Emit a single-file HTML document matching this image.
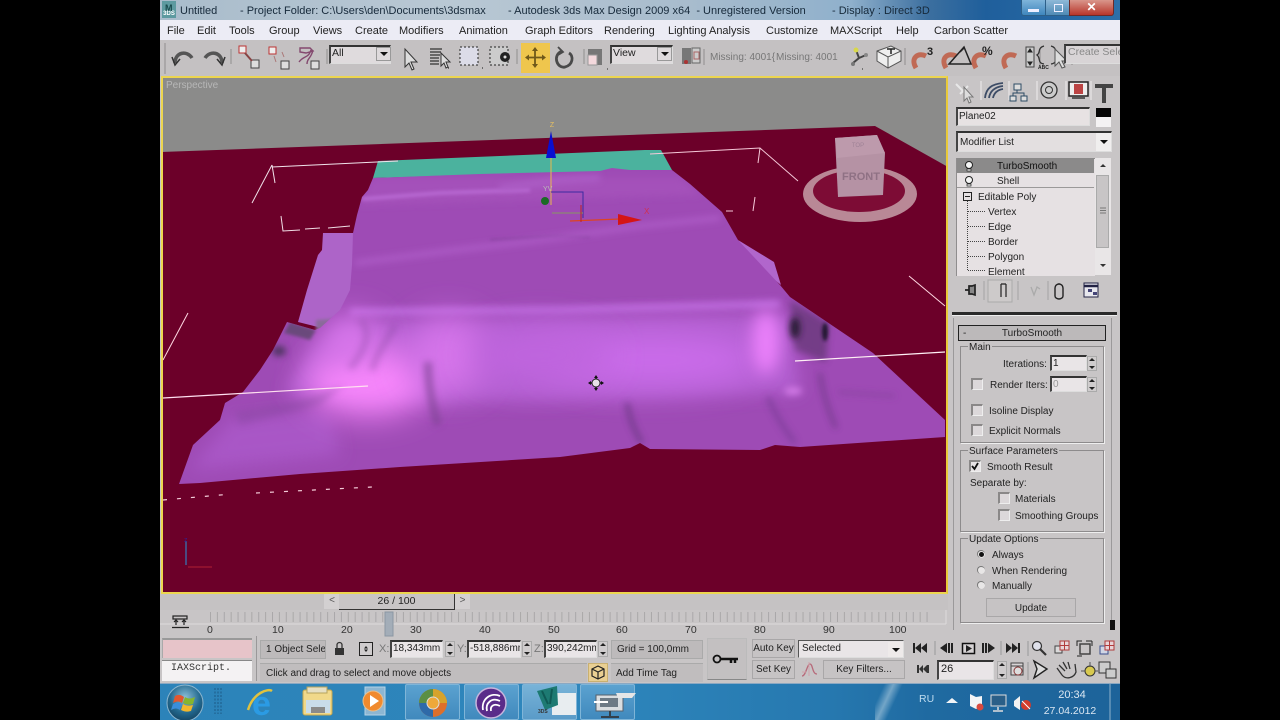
<!DOCTYPE html>
<html><head><meta charset="utf-8"><style>
html,body{margin:0;padding:0;background:#000;width:1280px;height:720px;overflow:hidden}
#s{position:absolute;left:160px;top:0;width:960px;height:720px;background:#c8c5c6;overflow:hidden;font-family:"Liberation Sans",sans-serif;font-size:10.5px;color:#222}
#s *{box-sizing:border-box}
.t{position:absolute;white-space:nowrap;line-height:12px}
.m{position:absolute;white-space:nowrap;line-height:12px;top:25px;font-size:11px;color:#222}
.n{position:absolute;white-space:nowrap;line-height:12px;top:624px;font-size:10.5px;color:#333}
.b{position:absolute}
.in{position:absolute;background:#e9e5e7;border-top:2px solid #333;border-left:2px solid #444;border-right:1px solid #ddd;border-bottom:1px solid #ddd;white-space:nowrap;overflow:hidden}
.cb{position:absolute;width:12px;height:12px;background:#dcd8da;border-top:2px solid #8a8888;border-left:2px solid #8a8888;border-right:1px solid #eee;border-bottom:1px solid #eee}
.gp{position:absolute;border:1px solid #8d8b8c;box-shadow:1px 1px 0 #eee}
.lg{position:absolute;background:#c8c5c6;padding:0 1px;line-height:12px;white-space:nowrap;color:#222}
.r{position:absolute;width:8px;height:8px;border-radius:50%;background:#e8e6e6;border-top:1px solid #777;border-left:1px solid #777}
.sp{position:absolute;width:10px;background:#cfcccd;border:1px solid #aaa}
.sp:before{content:"";position:absolute;left:1px;top:1px;border:3px solid transparent;border-top:0;border-bottom:3px solid #222}
.sp:after{content:"";position:absolute;left:1px;bottom:1px;border:3px solid transparent;border-bottom:0;border-top:3px solid #222}
.dd{position:absolute;background:#dedadc;border:1px solid #999}
.dd:after{content:"";position:absolute;left:50%;top:50%;margin:-2px 0 0 -4px;border:4px solid transparent;border-bottom:0;border-top:4px solid #111}
.btn{position:absolute;background:#c6c3c4;border:1px solid #a9a7a8;text-align:center;color:#222}
.tb{position:absolute;top:684px;width:55px;height:36px;background:linear-gradient(#5ba2d0,#4089bd);border:1px solid #7fb5d8;border-radius:2px}
svg{position:absolute;overflow:visible}
</style></head><body><div id="s">

<!-- title bar -->
<div class="b" style="left:0;top:0;width:960px;height:20px;background:linear-gradient(90deg,#a9bccb 0,#b9c8d4 30%,#a8bccd 55%,#8fb0cc 72%,#3c6f9f 80%,#1f5f9c 86%,#2d6fa8 100%)"></div>
<div class="b" style="left:2px;top:1px;width:14px;height:17px;background:#5d9aa0;color:#fff;font-size:6px;line-height:26px;font-weight:bold;text-align:center">3DS</div>
<div class="t" style="left:5px;top:2px;font-size:9px;font-weight:bold;color:#17494c">M</div>
<div class="t" style="left:20px;top:5px;font-size:11px;color:#16293a">Untitled</div>
<div class="t" style="left:80px;top:5px;font-size:11px;color:#16293a">- Project Folder: C:\Users\den\Documents\3dsmax</div>
<div class="t" style="left:348px;top:5px;font-size:11px;color:#16293a">- Autodesk 3ds Max Design 2009 x64&nbsp; - Unregistered Version</div>
<div class="t" style="left:672px;top:5px;font-size:11px;color:#16293a">- Display : Direct 3D</div>
<div class="b" style="left:861px;top:0;width:25px;height:16px;background:linear-gradient(#7fb4da,#3f86bd);border-radius:0 0 0 3px;border:1px solid #2d5f88;border-top:0"></div>
<div class="b" style="left:868px;top:9px;width:11px;height:3px;background:#eef"></div>
<div class="b" style="left:886px;top:0;width:23px;height:16px;background:linear-gradient(#8fb9d8,#4f8ab5);border-bottom:1px solid #2d5f88"></div>
<div class="b" style="left:894px;top:4px;width:9px;height:8px;border:1px solid #eef"></div>
<div class="b" style="left:909px;top:0;width:45px;height:16px;background:linear-gradient(#d9968b,#b8352a);border:1px solid #6d2a28;border-top:0;border-radius:0 0 3px 0;color:#fff;font-weight:bold;font-size:12px;text-align:center;line-height:15px">✕</div>

<!-- menu -->
<div class="b" style="left:0;top:20px;width:960px;height:20px;background:#ececf5"></div>
<div class="m" style="left:7px">File</div>
<div class="m" style="left:37px">Edit</div>
<div class="m" style="left:69px">Tools</div>
<div class="m" style="left:109px">Group</div>
<div class="m" style="left:153px">Views</div>
<div class="m" style="left:195px">Create</div>
<div class="m" style="left:239px">Modifiers</div>
<div class="m" style="left:299px">Animation</div>
<div class="m" style="left:365px">Graph Editors</div>
<div class="m" style="left:444px">Rendering</div>
<div class="m" style="left:508px">Lighting Analysis</div>
<div class="m" style="left:606px">Customize</div>
<div class="m" style="left:670px">MAXScript</div>
<div class="m" style="left:736px">Help</div>
<div class="m" style="left:774px">Carbon Scatter</div>

<!-- toolbar -->
<div class="b" style="left:0;top:40px;width:960px;height:36px;background:#c4c1c2"></div>
<svg width="960" height="40" style="left:0;top:40px" fill="none">
<path d="M5 3V34" stroke="#8f8d8e"/>
<path d="M15 23C15 12 27 10 32 18" stroke="#555" stroke-width="3.500"/><path d="M12 17l3 8 5-6" stroke="#333" stroke-width="1.500"/>
<path d="M45 18C50 10 62 12 62 23" stroke="#555" stroke-width="3.500"/><path d="M57 19l5 6 3-8" stroke="#333" stroke-width="1.500"/>
<path d="M71 9V24M167 9V24M357 9V24M424 9V24" stroke="#908e8f"/>
<rect x="79" y="6" width="7" height="7" fill="#eee" stroke="#b33"/><rect x="91" y="20" width="8" height="8" fill="#ddd" stroke="#444"/><path d="M85 13l7 8" stroke="#844" stroke-width="2"/>
<rect x="109" y="7" width="7" height="7" fill="#eee" stroke="#b33"/><rect x="121" y="21" width="8" height="8" fill="#ddd" stroke="#444"/><path d="M114 16l2 6M122 12l2 5" stroke="#a77"/>
<path d="M140 8h10l3 3-7 2-6-1zM139 22c5-7 9-3 12-12M147 24c0-6 4-5 6-14" stroke="#84496f" stroke-width="1.400"/><rect x="151" y="21" width="8" height="8" fill="#ddd" stroke="#444"/>
<path d="M245 9v18l4-4 3 7 2-1-3-7h6z" fill="#ddd" stroke="#333"/>
<path d="M270 9h12M270 12h11M270 15h10M270 18h9M270 21h9M270 24h9" stroke="#333" stroke-width="1.300"/><path d="M281 13v13l3-3 2 5 2-1-2-5h4z" fill="#ddd" stroke="#333"/>
<rect x="300" y="7" width="18" height="18" fill="#dcdce8" stroke="#222" stroke-dasharray="2 2"/>
<rect x="330" y="7" width="18" height="18" fill="#ccc" stroke="#222" stroke-dasharray="2 2"/><circle cx="345" cy="17" r="5" fill="#222"/><circle cx="345" cy="17" r="1.500" fill="#ddd"/>
<path d="M322 28h1M288 28h1" stroke="#111"/>
<rect x="361" y="3" width="29" height="30" fill="#efc64d"/>
<path d="M375 9V26M367 17.500H384" stroke="#70591a" stroke-width="1.800"/><path d="M375 7l3 4h-6zM375 28l3-4h-6zM365 17.500l4-3v6zM386 17.500l-4-3v6z" fill="#70591a"/>
<path d="M402 11C392 15 397 29 405 27C413 25 414 16 409 13" stroke="#4a4a4a" stroke-width="2.800"/><path d="M398 7l5 5-5 3" stroke="#4a4a4a" stroke-width="1.800"/>
<rect x="428" y="9" width="14" height="16" fill="#777"/><rect x="428" y="15" width="9" height="10" fill="#f4d9dd" stroke="#999"/>
<path d="M447 29h1M702 29h1" stroke="#222"/>
<rect x="522" y="8" width="9" height="16" fill="#777"/><rect x="532" y="8" width="8" height="15" fill="#ccc" stroke="#666"/><circle cx="526" cy="22" r="2" fill="#a33"/><path d="M534 12h5v7h-5z" stroke="#a66"/>
<path d="M544 9V25M745 8V25M880 8V25M912 8V25" stroke="#8f8d8e"/>
<path d="M696 10l3 8-6 5M699 18l7-3" stroke="#444" stroke-width="2"/><circle cx="696" cy="10" r="2.500" fill="#d8d84a"/><circle cx="693" cy="24" r="2" fill="#777"/><circle cx="706" cy="15" r="2" fill="#888"/>
<path d="M717 11l14-5 10 5v10l-13 7-11-7z" fill="#eee" stroke="#555"/><path d="M717 11l11 6 13-6M728 17v11" stroke="#555"/><path d="M727 9h8M731 9v5" stroke="#222" stroke-width="1.500"/>
<g stroke-width="5"><path d="M756 28C750 18 758 12 766 16" stroke="#c06a55"/><path d="M786 28C780 18 788 12 796 16" stroke="#c06a55"/><path d="M816 28C810 18 818 12 826 16" stroke="#c06a55"/><path d="M846 28C840 18 848 12 856 16" stroke="#c06a55"/></g>
<path d="M789 24L804 7l7 17zM800 12l4-4" stroke="#222" stroke-width="1.500"/>
<rect x="866" y="7" width="8" height="20" fill="#ccc" stroke="#444"/><path d="M868 12h4l-2-3zM868 22h4l-2 3z" fill="#222" stroke="#222"/>
<path d="M884 6C877 8 881 13 877 15 881 18 877 23 884 24M891 6C898 8 894 13 898 15 894 18 898 23 891 24" stroke="#333" stroke-width="1.300"/>
<path d="M895 9v17l4-4 3 6 3-1-3-6h5z" fill="#ddd" stroke="#555"/>
</svg>
<div class="t" style="left:767px;top:46px;font-size:11px;font-weight:bold;color:#222">3</div>
<div class="t" style="left:822px;top:45px;font-size:12px;font-weight:bold;color:#222">%</div>
<div class="t" style="left:878px;top:62px;font-size:5px;font-weight:bold;color:#222">ABC</div>
<div class="in" style="left:169px;top:45px;width:62px;height:19px;padding-left:1px;line-height:13px;color:#222;background:#dfdbdd">All</div>
<div class="dd" style="left:216px;top:47px;width:15px;height:14px"></div>
<div class="in" style="left:450px;top:45px;width:63px;height:19px;padding-left:1px;line-height:13px;background:#dfdbdd">View</div>
<div class="dd" style="left:497px;top:47px;width:15px;height:14px"></div>
<div class="t" style="left:550px;top:52px;color:#777;font-size:10px">Missing: 4001{</div>
<div class="t" style="left:616px;top:52px;color:#777;font-size:10px;width:62px;overflow:hidden">Missing: 4001{</div>
<div class="in" style="left:904px;top:44px;width:56px;height:20px;color:#888;padding-left:2px;line-height:13px;border-right:0;background:#d8d4d6">Create Selec</div>

<!-- viewport -->
<svg width="787" height="518" viewBox="161 76 787 518" style="left:1px;top:76px;position:absolute;overflow:hidden">
<defs>
<filter id="b1" x="-100%" y="-300%" width="300%" height="700%"><feGaussianBlur stdDeviation="1.500"/></filter>
<filter id="b3" x="-100%" y="-300%" width="300%" height="700%"><feGaussianBlur stdDeviation="3.500"/></filter>
<filter id="b6" x="-100%" y="-200%" width="300%" height="500%"><feGaussianBlur stdDeviation="8"/></filter>
<filter id="b12" x="-100%" y="-100%" width="300%" height="300%"><feGaussianBlur stdDeviation="16"/></filter>
<clipPath id="c"><path d="M179 484L193 445 220 420 225 403 243 392 260 370 273 350 287 322 315 330 320 328 340 310 350 290 352 265 353 233 357 215 362 197 368 190 373 178 480 174 600 171 612 168 630 170 672 170 690 184 722 212 738 240 780 285 790 297 873 353 945 420 945 437 800 447 775 445 760 450 650 449 640 443 630 448 560 457 400 467 300 474 200 483Z"/></clipPath>
</defs>
<rect x="161" y="76" width="787" height="518" fill="#8b8b8a"/>
<path d="M161 152L875 126 948 167V594H161Z" fill="#6c0029"/>
<path d="M378 161L645 150 661 150 672 170 373 178Z" fill="#4bb29e"/>
<path d="M323 233L355 233 350 300 330 330 298 322 307 290 318 255 322 250Z" fill="#ad64c8"/>
<path d="M316 320L346 318 345 326 316 334Z" fill="#8a6a9a" filter="url(#b1)"/>
<path d="M722 212L738 240 774 262 781 285 760 268 738 240Z" fill="#b166cc"/>
<rect x="160" y="120" width="800" height="400" fill="#9e4bb5" clip-path="url(#c)"/>
<g clip-path="url(#c)">
<path d="M373 178H680L700 195 360 205Z" fill="#a451ba" filter="url(#b3)"/>
<path d="M362 199L440 193 530 190" stroke="#b767d1" stroke-width="4" fill="none" filter="url(#b1)"/>
<path d="M500 188L560 180 600 178" stroke="#ad5ec7" stroke-width="6" fill="none" filter="url(#b3)"/>
<path d="M490 240L560 236 590 237" stroke="#84409c" stroke-width="2" fill="none" filter="url(#b1)"/>
<path d="M355 263L440 252 540 240 640 226 720 218" stroke="#ae5cc7" stroke-width="5" fill="none" filter="url(#b3)"/>
<path d="M345 322L790 314 800 392 600 400 420 402 285 395 310 350Z" fill="#b25ed0" filter="url(#b6)"/>
<path d="M350 312L560 310 780 304" stroke="#bc69db" stroke-width="8" fill="none" filter="url(#b3)"/>
<path d="M190 470L340 455 330 410 230 420Z" fill="#a956c6" filter="url(#b6)"/>
<ellipse cx="368" cy="382" rx="62" ry="34" fill="#f786fb" filter="url(#b12)"/>
<ellipse cx="350" cy="340" rx="30" ry="24" fill="#d977ec" filter="url(#b12)"/>
<ellipse cx="448" cy="355" rx="40" ry="38" fill="#d574ea" filter="url(#b12)"/>
<ellipse cx="650" cy="360" rx="110" ry="26" fill="#ca6cea" filter="url(#b12)"/>
<ellipse cx="540" cy="355" rx="70" ry="28" fill="#bf65de" filter="url(#b12)"/>
<ellipse cx="766" cy="342" rx="14" ry="32" fill="#ea80fa" filter="url(#b6)"/>
<path d="M360 320C372 330 366 350 350 368" stroke="#8d4ca6" stroke-width="6" fill="none" filter="url(#b3)" opacity=".4"/>
<path d="M395 325C388 340 378 350 372 370" stroke="#7f4297" stroke-width="6" fill="none" filter="url(#b3)" opacity=".35"/>
<path d="M428 362C428 385 432 405 438 425" stroke="#7a4290" stroke-width="8" fill="none" filter="url(#b3)" opacity=".6"/>
<path d="M235 412L300 400 345 385 320 405 240 425Z" fill="#7e4498" filter="url(#b3)" opacity=".3"/>
<path d="M290 322L316 330 310 340 284 333Z" fill="#6a4a7c" filter="url(#b1)"/>
<ellipse cx="279" cy="351" rx="7" ry="5" fill="#4e3460" filter="url(#b3)"/>
<path d="M627 403C630 420 634 430 642 443" stroke="#703a88" stroke-width="5" fill="none" filter="url(#b3)" opacity=".85"/>
<path d="M768 397C775 415 785 430 795 443" stroke="#783c96" stroke-width="5" fill="none" filter="url(#b3)" opacity=".7"/>
<path d="M820 373C822 390 828 410 836 428" stroke="#5a3072" stroke-width="3" fill="none" filter="url(#b3)" opacity=".7"/>
<path d="M790 300L829 323 826 362 795 350Z" fill="#6d3a7f" filter="url(#b3)" opacity=".85"/>
<ellipse cx="795" cy="328" rx="5" ry="11" fill="#271a33" filter="url(#b3)"/>
<ellipse cx="825" cy="332" rx="3" ry="9" fill="#241630" filter="url(#b1)"/>
<ellipse cx="793" cy="391" rx="9" ry="4" fill="#d27ae6" filter="url(#b3)"/>
<path d="M838 392L895 396" stroke="#7e3d96" stroke-width="2" fill="none" filter="url(#b3)"/>
</g>
<path d="M272 167L398 161M272 165L252 203M272 165L275 183" stroke="#f0e2ea" fill="none"/>
<path d="M650 154L760 148 798 181M760 148L758 163M755 197L753 211M733 211L726 211" stroke="#f5c9d9" fill="none"/>
<path d="M281 216L283 231 300 230M305 229L320 228M328 228L350 226" stroke="#f0dde5" fill="none"/>
<path d="M909 276L945 306M188 313L163 360" stroke="#ffd7e2" fill="none"/>
<path d="M163 398L368 386" stroke="#ffdff0" stroke-width="1.200" fill="none"/>
<path d="M795 361L945 352" stroke="#fff0f5" stroke-width="1.200" fill="none"/>
<path d="M163 500L232 494M256 493L372 487" stroke="#f3ccd8" stroke-dasharray="4 10" stroke-width="1.200" fill="none"/>
<path d="M551 155V205" stroke="#e8b84f"/>
<path d="M551 131L556 158H546Z" fill="#0a0fd0"/>
<path d="M551 192H583V218" stroke="#3b2aa0" fill="none"/><path d="M583 213H552" stroke="#8c8a70" stroke-width="2" fill="none" opacity=".6"/>
<path d="M570 221L620 219" stroke="#d42" stroke-width="1.200"/><path d="M618 214L642 220 618 225Z" fill="#d51515"/><path d="M581 205V222" stroke="#b22"/>
<circle cx="545" cy="201" r="4" fill="#1b6a25"/>
<text x="552" y="127" font-size="7" fill="#e8c060" text-anchor="middle" font-family="Liberation Sans">Z</text>
<text x="644" y="214" font-size="8" fill="#d03050" font-family="Liberation Sans">X</text>
<text x="543" y="191" font-size="7" fill="#bbb" font-family="Liberation Sans">YV</text>
<!-- viewcube -->
<ellipse cx="860" cy="194" rx="57" ry="28" fill="#b98896"/>
<ellipse cx="859" cy="191" rx="46" ry="21" fill="#7d0c35"/>
<path d="M835 138L877 135 885 153 883 195 838 197Z" fill="#b592a4"/>
<path d="M835 138L877 135 885 153 837 158Z" fill="#bd9aac"/>
<text x="861" y="180" font-size="11" font-weight="bold" fill="#8f7184" text-anchor="middle" font-family="Liberation Sans">FRONT</text>
<text x="858" y="147" font-size="6" fill="#9f8296" text-anchor="middle" font-family="Liberation Sans">TOP</text>
<!-- small axis -->
<path d="M186 565V541" stroke="#4a4a80" stroke-width="2"/><path d="M188 567H212" stroke="#b02033"/><text x="184" y="542" font-size="7" fill="#34208a" font-family="Liberation Sans">z</text>
<!-- cursor -->
<path d="M596 377V389M590 383H602" stroke="#111" stroke-width="1.500"/><circle cx="596" cy="383" r="4" fill="#e8e0e8" stroke="#222"/><path d="M596 375l2 3h-4zM596 391l2-3h-4zM588 383l3 2v-4zM604 383l-3 2v-4z" fill="#111"/>
</svg>
<div class="b" style="left:1px;top:76px;width:787px;height:518px;border:2px solid #ecd54f;border-right-color:#e8c93a"></div>
<div class="t" style="left:6px;top:80px;color:#b7b7b7;font-size:10px">Perspective</div>

<!-- command panel -->
<div class="b" style="left:788px;top:76px;width:172px;height:554px;background:#c8c5c6"></div>
<svg width="172" height="40" style="left:788px;top:78px" fill="none">
<path d="M8 6L22 20M20 8l-8 8" stroke="#e8e8e8" stroke-width="2"/><path d="M16 9v14l3-3 2 5 2-1-2-5h4z" fill="#ddd" stroke="#777"/>
<path d="M33 3V22M61 3V22M89 3V22M118 3V22M143 3V22" stroke="#efeded"/>
<path d="M37 20C38 10 44 6 55 5M41 20C42 13 47 9 55 8M45 20C46 15 49 12 55 11" stroke="#3d4c66" stroke-width="1.800"/>
<rect x="66" y="6" width="7" height="6" fill="#ddd" stroke="#2d4a64"/><rect x="62" y="18" width="6" height="5" fill="#ddd" stroke="#2d4a64"/><rect x="73" y="18" width="6" height="5" fill="#ddd" stroke="#2d4a64"/><path d="M69 12V15M65 18V15H76V18" stroke="#2d4a64"/>
<circle cx="101" cy="12" r="8" fill="#ccc" stroke="#333" stroke-width="1.300"/><circle cx="101" cy="12" r="3.500" stroke="#333"/>
<rect x="121" y="4" width="19" height="14" fill="#eee" stroke="#222" stroke-width="1.500"/><path d="M126 6h9v10h-9z" fill="#b44"/><path d="M124 20H137" stroke="#333" stroke-width="1.500"/>
<path d="M147 6H165V10H158V25H154V10H147Z" fill="#444"/>
</svg>
<div class="in" style="left:796px;top:107px;width:134px;height:19px;padding-left:1px;line-height:16px;font-size:10px;background:#e7e2e3">Plane02</div>
<div class="b" style="left:936px;top:108px;width:15px;height:9px;background:#050505"></div>
<div class="b" style="left:936px;top:117px;width:15px;height:10px;background:#f4f2f3"></div>
<div class="in" style="left:796px;top:131px;width:156px;height:21px;padding-left:2px;line-height:20px;font-size:10px;background:#e3dfe0">Modifier List</div>
<div class="dd" style="left:936px;top:133px;width:15px;height:18px;background:#f0eeee;border:0"></div>
<!-- stack -->
<div class="b" style="left:796px;top:158px;width:139px;height:118px;background:#e6e1e3;border-top:1px solid #8f8d8e;border-left:1px solid #8f8d8e"></div>
<div class="b" style="left:797px;top:158px;width:137px;height:15px;background:#8b8a8a"></div>
<div class="b" style="left:797px;top:187px;width:137px;height:1px;background:#9b9999"></div>
<div class="t" style="left:837px;top:161px;font-size:10px;color:#111">TurboSmooth</div>
<div class="t" style="left:837px;top:176px;font-size:10px">Shell</div>
<svg width="140" height="120" style="left:796px;top:158px" fill="none">
<circle cx="13" cy="7" r="3.500" fill="#f5f5f5" stroke="#222"/><path d="M11 11h4v2h-4z" fill="#fff" stroke="#222" stroke-width=".7"/>
<circle cx="13" cy="22" r="3.500" fill="#f5f5f5" stroke="#222"/><path d="M11 26h4v2h-4z" fill="#fff" stroke="#222" stroke-width=".7"/>
<rect x="7.500" y="34.500" width="8" height="8" stroke="#222"/><path d="M9 38.500h5" stroke="#222"/>
<path d="M11.500 43V113M12 53.500h18M12 68.500h18M12 83.500h18M12 98.500h18M12 112.500h18" stroke="#444" stroke-dasharray="1 1"/>
</svg>
<div class="t" style="left:818px;top:192px;font-size:10px">Editable Poly</div>
<div class="t" style="left:828px;top:207px;font-size:10px">Vertex</div>
<div class="t" style="left:828px;top:222px;font-size:10px">Edge</div>
<div class="t" style="left:828px;top:237px;font-size:10px">Border</div>
<div class="t" style="left:828px;top:252px;font-size:10px">Polygon</div>
<div class="b" style="left:828px;top:267px;width:60px;height:9px;overflow:hidden"><div class="t" style="left:0;top:0;font-size:10px">Element</div></div>
<div class="b" style="left:935px;top:158px;width:16px;height:117px;background:#e9e6e7"></div>
<div class="b" style="left:936px;top:175px;width:13px;height:73px;background:#c8c5c6;border:1px solid #aaa"></div>
<svg width="16" height="117" style="left:935px;top:158px" fill="none"><path d="M5 9h6l-3-3zM5 106h6l-3 3z" fill="#333"/><path d="M5 50h6M5 52.500h6M5 55h6" stroke="#777"/></svg>
<svg width="172" height="30" style="left:788px;top:278px" fill="none">
<path d="M17 12h4M21 8h3l3-1v10l-3-1h-3z" stroke="#222" stroke-width="1.700" fill="#888"/>
<path d="M36 3V22M70 3V22M100 3V22" stroke="#a5a3a4"/>
<rect x="40" y="2" width="24" height="22" stroke="#aaa" fill="#cdcaca"/>
<path d="M53 6H58M53 6V19M58 6V19" stroke="#222" stroke-width="1.200"/>
<path d="M83 9l3 8 3-8 3 2" stroke="#aaa" stroke-width="1.300"/>
<path d="M107 10a4 4 0 0 1 8 0v8a4 3 0 0 1-8 0zM110 6h2" stroke="#222" stroke-width="1.400"/>
<rect x="136" y="5" width="14" height="14" fill="#e8e8ee" stroke="#224"/><path d="M136 8h14" stroke="#224" stroke-width="2.500"/><rect x="140" y="11" width="4" height="3" fill="#447"/><rect x="145" y="14" width="4" height="3" fill="#447"/>
</svg>
<div class="b" style="left:792px;top:312px;width:165px;height:3px;background:#2a2a2a"></div>
<div class="b" style="left:792px;top:315px;width:165px;height:1px;background:#eee"></div>

<!-- rollout -->
<div class="b" style="left:793px;top:318px;width:1px;height:312px;background:#9b999a"></div>
<div class="b" style="left:951px;top:318px;width:1px;height:310px;background:#9b999a"></div>
<div class="b" style="left:798px;top:325px;width:148px;height:16px;background:#bcb9ba;border:1px solid #222;text-align:center;line-height:15px;font-size:10px;color:#222">TurboSmooth</div>
<div class="t" style="left:803px;top:328px;font-size:10px">-</div>
<div class="gp" style="left:800px;top:346px;width:144px;height:97px"></div>
<div class="lg" style="left:808px;top:342px;font-size:10px">Main</div>
<div class="t" style="left:843px;top:359px;font-size:10px">Iterations:</div>
<div class="in" style="left:890px;top:355px;width:37px;height:16px;line-height:13px;padding-left:1px;font-size:10px">1</div>
<div class="sp" style="left:927px;top:356px;height:15px"></div>
<div class="cb" style="left:811px;top:378px"></div>
<div class="t" style="left:830px;top:380px;font-size:10px">Render Iters:</div>
<div class="in" style="left:890px;top:376px;width:37px;height:16px;line-height:13px;padding-left:1px;font-size:10px;color:#999">0</div>
<div class="sp" style="left:927px;top:377px;height:15px"></div>
<div class="cb" style="left:811px;top:404px"></div>
<div class="t" style="left:829px;top:406px;font-size:10px">Isoline Display</div>
<div class="cb" style="left:811px;top:424px"></div>
<div class="t" style="left:829px;top:426px;font-size:10px">Explicit Normals</div>

<div class="gp" style="left:800px;top:450px;width:144px;height:82px"></div>
<div class="lg" style="left:808px;top:446px;font-size:10px">Surface Parameters</div>
<div class="cb" style="left:809px;top:460px;background:#e8e4e6"></div>
<svg width="12" height="12" style="left:809px;top:460px" fill="none"><path d="M3 6l2.500 3L9 3" stroke="#111" stroke-width="1.800"/></svg>
<div class="t" style="left:827px;top:462px;font-size:10px">Smooth Result</div>
<div class="t" style="left:810px;top:478px;font-size:10px">Separate by:</div>
<div class="cb" style="left:838px;top:492px"></div>
<div class="t" style="left:855px;top:494px;font-size:10px">Materials</div>
<div class="cb" style="left:838px;top:509px"></div>
<div class="t" style="left:855px;top:511px;font-size:10px">Smoothing Groups</div>

<div class="gp" style="left:800px;top:538px;width:144px;height:85px"></div>
<div class="lg" style="left:808px;top:534px;font-size:10px">Update Options</div>
<div class="r" style="left:817px;top:550px"></div>
<div class="b" style="left:819px;top:552px;width:5px;height:5px;border-radius:50%;background:#111"></div>
<div class="t" style="left:832px;top:550px;font-size:10px">Always</div>
<div class="r" style="left:817px;top:566px"></div>
<div class="t" style="left:832px;top:566px;font-size:10px">When Rendering</div>
<div class="r" style="left:817px;top:581px"></div>
<div class="t" style="left:832px;top:581px;font-size:10px">Manually</div>
<div class="btn" style="left:826px;top:598px;width:90px;height:19px;line-height:19px;font-size:10px">Update</div>
<div class="b" style="left:950px;top:620px;width:5px;height:10px;background:#111"></div>

<!-- time slider -->
<div class="b" style="left:0;top:594px;width:788px;height:16px;background:#c5c2c3"></div>
<div class="b" style="left:164px;top:594px;width:16px;height:15px;background:#d3d0d1;color:#555;font-size:10px;text-align:center;line-height:14px">&lt;</div>
<div class="b" style="left:179px;top:594px;width:116px;height:16px;background:#c8c5c6;border-bottom:1px solid #333;border-right:1px solid #333;text-align:center;line-height:15px;font-size:10.500px;color:#222">26 / 100</div>
<div class="b" style="left:295px;top:594px;width:15px;height:15px;background:#d3d0d1;color:#555;font-size:10px;text-align:center;line-height:14px">&gt;</div>
<svg width="790" height="36" style="left:0;top:610px" fill="none">
<line x1="50" y1="7" x2="770" y2="7" stroke="#aaa8a9" stroke-width="10" stroke-dasharray="1 5.890"/>
<path d="M0 14H786M786 0V14" stroke="#dedcdc"/>
<rect x="225" y="2" width="8" height="24" fill="#a3adb8" stroke="#8b97a3"/>
<rect x="13" y="6" width="14" height="3" stroke="#222" stroke-width="1.200"/><path d="M12 17.500H29M16 10v5M24 10v5M14 12l2-2 2 2M22 12l2-2 2 2" stroke="#222" stroke-width="1.200"/>
</svg>
<div class="n" style="left:47px">0</div>
<div class="n" style="left:112px">10</div>
<div class="n" style="left:181px">20</div>
<div class="n" style="left:250px">30</div>
<div class="n" style="left:319px">40</div>
<div class="n" style="left:388px">50</div>
<div class="n" style="left:456px">60</div>
<div class="n" style="left:525px">70</div>
<div class="n" style="left:594px">80</div>
<div class="n" style="left:663px">90</div>
<div class="n" style="left:729px">100</div>

<!-- status -->
<div class="b" style="left:2px;top:638px;width:90px;height:20px;background:#e7c4c9;border-top:2px solid #999;border-left:1px solid #aaa"></div>
<div class="b" style="left:2px;top:660px;width:90px;height:21px;background:#f4f2f3;border-top:1px solid #888;padding-left:9px;line-height:16px;font-family:'Liberation Mono',monospace;font-size:10px;color:#333">IAXScript.</div>
<div class="b" style="left:96px;top:636px;width:1px;height:45px;background:#9a9899"></div>
<div class="b" style="left:100px;top:640px;width:66px;height:19px;background:#bdbabb;border:1px solid #aaa;line-height:18px;padding-left:5px;font-size:10px;overflow:hidden;white-space:nowrap">1 Object Sele</div>
<svg width="40" height="20" style="left:172px;top:640px" fill="none"><rect x="3" y="8" width="9" height="7" fill="#333"/><path d="M5 8V5a2.500 2.500 0 0 1 5 0V8" stroke="#333" stroke-width="1.300"/></svg>
<div class="b" style="left:199px;top:642px;width:14px;height:14px;border:1px solid #222;background:#cfcccd"></div>
<svg width="14" height="14" style="left:199px;top:642px" fill="none"><path d="M7 4l2 2.500H5zM7 10l2-2.500H5z" fill="#222"/></svg>
<div class="t" style="left:219px;top:643px;font-size:11px;color:#777">X:</div>
<div class="in" style="left:230px;top:640px;width:53px;height:18px;line-height:14px;padding-left:1px;font-size:10px">18,343mm</div>
<div class="sp" style="left:285px;top:641px;height:16px"></div>
<div class="t" style="left:297px;top:643px;font-size:11px;color:#777">Y:</div>
<div class="in" style="left:307px;top:640px;width:54px;height:18px;line-height:14px;padding-left:1px;font-size:10px">-518,886mm</div>
<div class="sp" style="left:362px;top:641px;height:16px"></div>
<div class="t" style="left:374px;top:643px;font-size:11px;color:#777">Z:</div>
<div class="in" style="left:384px;top:640px;width:53px;height:18px;line-height:14px;padding-left:1px;font-size:10px">390,242mm</div>
<div class="sp" style="left:438px;top:641px;height:16px"></div>
<div class="b" style="left:451px;top:640px;width:92px;height:19px;background:#bdbabb;line-height:18px;padding-left:5px;font-size:10px;border:1px solid #aaa">Grid = 100,0mm</div>
<div class="b" style="left:100px;top:663px;width:327px;height:19px;background:#c0bdbe;border-top:1px solid #aaa;line-height:20px;padding-left:6px;font-size:10px">Click and drag to select and move objects</div>
<div class="b" style="left:428px;top:663px;width:20px;height:19px;background:#e9cf92;border:1px solid #c9b070"></div>
<svg width="20" height="19" style="left:428px;top:663px" fill="none"><path d="M4 6l6-3 6 3v7l-6 3-6-3zM4 6l6 3 6-3M10 9v7" stroke="#222" stroke-width="1.200"/></svg>
<div class="b" style="left:451px;top:663px;width:92px;height:19px;background:#c0bdbe;line-height:20px;padding-left:5px;font-size:10px;border-top:1px solid #aaa">Add Time Tag</div>
<!-- key -->
<div class="b" style="left:547px;top:638px;width:40px;height:42px;background:#c3c0c1;border:1px solid #bbb;border-bottom:1px solid #888"></div>
<svg width="40" height="20" style="left:547px;top:650px" fill="none"><circle cx="10" cy="9" r="3.500" stroke="#111" stroke-width="1.800"/><path d="M14 9H31M24 9V13M28 9V13" stroke="#111" stroke-width="2.500"/></svg>
<div class="btn" style="left:592px;top:639px;width:43px;height:19px;line-height:18px;font-size:10px">Auto Key</div>
<div class="btn" style="left:592px;top:660px;width:43px;height:19px;line-height:18px;font-size:10px">Set Key</div>
<div class="in" style="left:638px;top:640px;width:106px;height:18px;padding-left:3px;line-height:15px;font-size:10px;border-top:1px solid #555;border-left:1px solid #555">Selected</div>
<div class="dd" style="left:728px;top:642px;width:15px;height:15px;background:#eeeaea;border:0"></div>
<svg width="22" height="20" style="left:640px;top:660px" fill="none"><path d="M2 16C6 16 7 4 10 4S12 14 17 14" stroke="#b76a7a" stroke-width="1.300"/><path d="M2 12H6M9 2V16" stroke="#d1a4ac"/></svg>
<div class="btn" style="left:663px;top:660px;width:82px;height:19px;line-height:18px;font-size:10px">Key Filters...</div>

<!-- animation & viewport controls -->
<svg width="210" height="46" style="left:750px;top:636px" fill="#222" stroke="none">
<path d="M3 7H5V17H3ZM5 12L11 7V17ZM11 12L17 7V17Z"/>
<path d="M30 12L37 7V17ZM38 7H40V17H38ZM41 7H43V17H41Z"/>
<rect x="52.500" y="7.500" width="12" height="10" fill="#d6d3d4" stroke="#111" stroke-width="1.500"/><path d="M56 9L62 12.500 56 16Z"/>
<path d="M72 7H74V17H72ZM75 7H77V17H75ZM78 7L85 12 78 17Z"/>
<path d="M96 7L102 12 96 17ZM102 7L108 12 102 17ZM108 7H110V17H108Z"/>
<path d="M91 5V19M118 5V20M118 26V44M25 5V19" stroke="#999" fill="none"/>
<circle cx="127" cy="10" r="4.500" fill="#dfe0ea" stroke="#333" stroke-width="1.200"/><path d="M130 13L136 19" stroke="#333" stroke-width="2.200"/>
<rect x="145" y="10" width="7" height="7" fill="#dadada" stroke="#444"/><rect x="150" y="5" width="9" height="9" fill="#e8d5d8" stroke="#b13b3b"/><path d="M154.500 5V14M150 9.500H159" stroke="#b13b3b"/>
<rect x="170" y="8" width="10" height="10" fill="none" stroke="#444" stroke-width="1.500"/><path d="M172 5H167V10M182 5H176M182 5V10M167 20H172" fill="none" stroke="#222"/>
<rect x="190" y="10" width="8" height="8" fill="#d0d6e4" stroke="#3b4f8c"/><rect x="195" y="5" width="9" height="9" fill="#e8d5d8" stroke="#b13b3b"/><path d="M199.500 5V14M195 9.500H204" stroke="#b13b3b"/>
<path d="M7 29H9V37H7ZM9 33L13 29V37ZM13 33L17 29V37ZM17 29H19V37H17Z" opacity=".9"/>
<rect x="101" y="27" width="12" height="12" fill="#d9d5d6" stroke="#444"/><circle cx="108" cy="35" r="4" fill="#ddd" stroke="#8a3a3a"/><path d="M101 30H113" stroke="#444"/>
<path d="M124 25L137 33 124 42 127 33Z" fill="#ddd" stroke="#222" stroke-width="1.400"/>
<path d="M147 32L152 39C156 44 164 42 166 36L165 28M149 29L155 35M153 26L157 33M158 26L160 33" fill="none" stroke="#333" stroke-width="1.300"/>
<circle cx="180" cy="35" r="5" fill="#d8c94f" stroke="#333"/><path d="M180 26V31M171 35H175M185 35H188" stroke="#555" fill="none"/>
<rect x="189" y="26" width="11" height="11" fill="#ccc" stroke="#333"/><rect x="196" y="33" width="10" height="9" fill="#ccc" stroke="#333"/>
</svg>
<div class="in" style="left:777px;top:660px;width:57px;height:20px;padding-left:2px;line-height:15px;font-size:11px">26</div>
<div class="sp" style="left:837px;top:661px;height:18px"></div>

<!-- taskbar -->
<div class="b" style="left:0;top:683px;width:960px;height:37px;background:linear-gradient(90deg,#2c83b9 0,#2e86bc 45%,#2678af 70%,#1f6aa1 80%,#1d639a 100%);border-top:1px solid #8ba8c2"></div>
<div class="b" style="left:715px;top:684px;width:30px;height:36px;background:linear-gradient(115deg,transparent 20%,#a9c9dd 40%,transparent 60%);opacity:.6"></div>
<div class="tb" style="left:245px"></div>
<div class="tb" style="left:304px"></div>
<div class="tb" style="left:362px;background:linear-gradient(#78b3d8,#5a9bc8)"></div>
<div class="tb" style="left:420px"></div>
<svg width="960" height="37" style="left:0;top:683px" fill="none">
<defs>
<radialGradient id="o" cx=".5" cy=".35" r=".7"><stop offset="0" stop-color="#8cbfd8"/><stop offset=".6" stop-color="#23698f"/><stop offset="1" stop-color="#123f5c"/></radialGradient>
</defs>
<circle cx="25" cy="20" r="18" fill="url(#o)" stroke="#8cb6cf"/>
<path d="M15 13C19 11 21 12 24 14L22 20C19 18 17 18 13 20Z" fill="#e2572f"/>
<path d="M25 14C28 16 31 16 35 14L33 21C29 22 27 22 23 20Z" fill="#86b52e"/>
<path d="M13 21C17 19 19 19 22 21L20 27C17 25 15 25 11 27Z" fill="#3a8edb"/>
<path d="M23 21C26 23 29 23 33 22L31 28C27 29 25 29 21 27Z" fill="#f2b72b"/>
<path d="M55 5v26M58 5v26M61 5v26" stroke="#1c5a86" stroke-dasharray="2 1.500"/>
<path d="M88 27C93 10 108 5 112 8" stroke="#e0c23f" stroke-width="2.500"/>
<rect x="143" y="7" width="29" height="25" rx="2" fill="#f1d98a" stroke="#c5a74e"/><rect x="147" y="4" width="20" height="6" fill="#e6e0c4" stroke="#b7a35c"/><rect x="146" y="17" width="24" height="13" fill="#c9dcea"/><rect x="151" y="24" width="14" height="6" fill="#8a8a8a"/>
<rect x="205" y="4" width="20" height="28" fill="#8cb6d2" stroke="#b5d3e6"/><circle cx="213" cy="18" r="10" fill="#f08a2e" stroke="#e7c08e"/><path d="M210 12L219 18 210 24Z" fill="#fff"/>
<circle cx="273" cy="20" r="14" fill="#dd6f2b"/><path d="M273 6A14 14 0 0 1 287 20L273 20Z" fill="#d6a32c"/><path d="M259 20A14 14 0 0 0 273 34L273 20Z" fill="#2e6aa8"/><path d="M259 20A14 14 0 0 1 273 6L273 20Z" fill="#5b8f44"/><circle cx="273" cy="20" r="6" fill="#eea83a" stroke="#ddd"/>
<circle cx="331" cy="20" r="15" fill="#5a2c8a" stroke="#c7b5dc" stroke-width="1.500"/><path d="M323 27C321 16 331 9 340 13M327 28C325 20 332 14 340 18M331 28C330 23 334 20 340 23" stroke="#fff" stroke-width="1.800"/>
<rect x="392" y="10" width="24" height="22" fill="#e8edf0"/><path d="M377 8L397 3 398 22 385 27Z" fill="#1d7a72"/><path d="M382 8L388 21M392 6L390 21" stroke="#0f5a55" stroke-width="2"/>
<rect x="436" y="12" width="27" height="16" fill="#d9dde0" stroke="#55606c"/><rect x="440" y="15" width="18" height="9" fill="#6d7a85"/><path d="M450 28V34M441 34H459" stroke="#33404c" stroke-width="2"/><path d="M456 10H476L472 15H458Z" fill="#e6e6e6"/><path d="M434 19H448" stroke="#fff" stroke-width="2"/>
<path d="M792 15l6 5h-12z" fill="#f2f4f6"/>
<path d="M810 11l6 3 6-1v11l-6 2-6-3z" fill="#f2f4f6"/>
<circle cx="820" cy="24" r="3.500" fill="#d84a40"/>
<rect x="831" y="12" width="15" height="11" fill="#2a5f88" stroke="#ddd"/><path d="M838 24V27M833 28H843" stroke="#ddd" stroke-width="1.500"/>
<path d="M854 18L860 13V27L854 23Z" fill="#f2f2f2"/><circle cx="866" cy="22" r="5" fill="#d23c2d"/><path d="M862 18L870 26" stroke="#fff"/>
<path d="M950 1V37" stroke="#8fb3cc"/>
</svg>
<div class="t" style="left:759px;top:693px;font-size:10.500px;color:#bfdcf0">RU</div>
<div class="t" style="left:912px;top:689px;font-size:11px;color:#dbe7f2;transform:translateX(-50%)">20:34</div>
<div class="t" style="left:910px;top:705px;font-size:10.500px;color:#dbe7f2;transform:translateX(-50%)">27.04.2012</div>
<div class="t" style="left:92px;top:687px;font-size:34px;line-height:34px;font-weight:bold;color:#2b9be4">e</div>
<div class="t" style="left:378px;top:706px;font-size:5px;font-weight:bold;color:#333">3DS</div>
</div></body></html>
